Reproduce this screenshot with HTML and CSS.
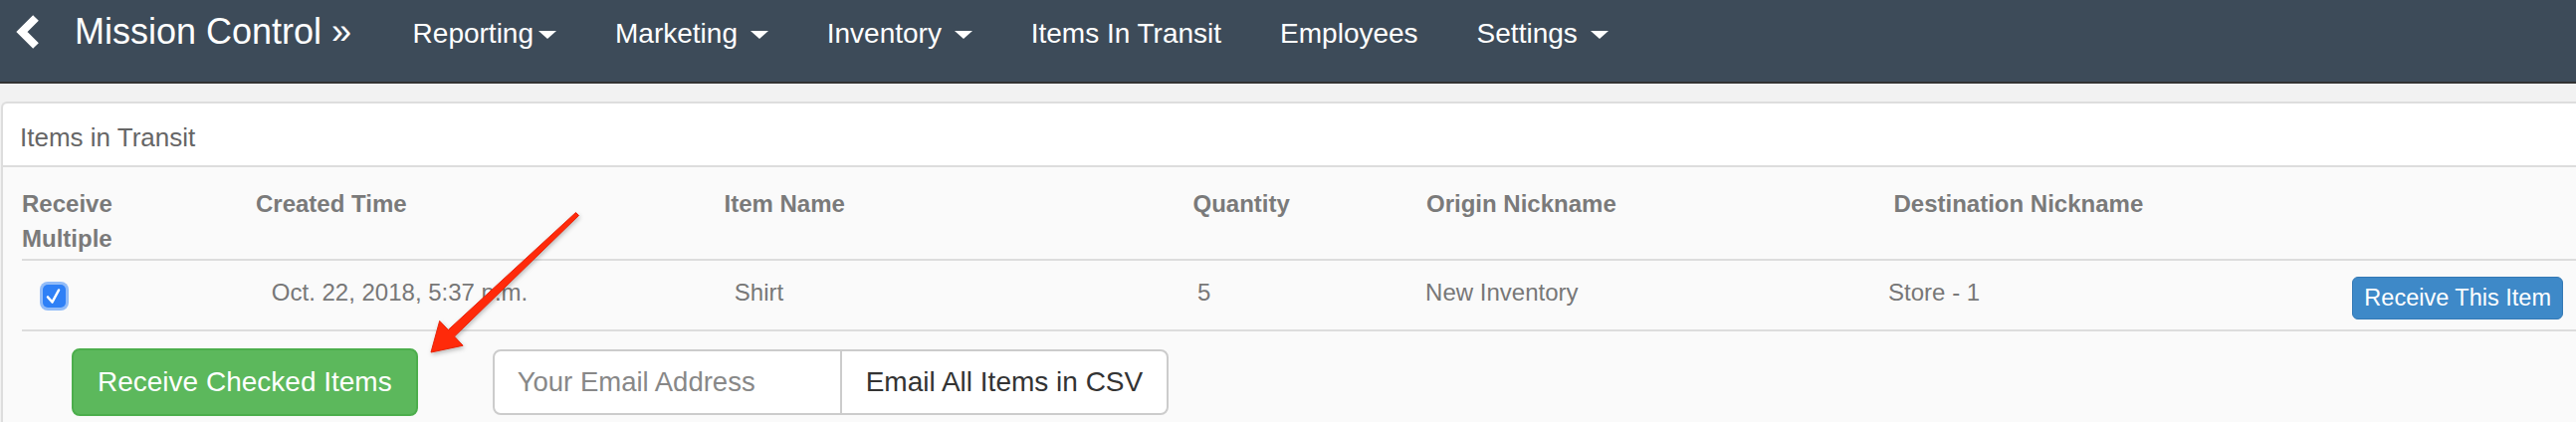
FILE: index.html
```html
<!DOCTYPE html>
<html lang="en">
<head>
    <meta charset="UTF-8">
    <meta name="viewport" content="width=device-width, initial-scale=1.0">
    <title>Items in Transit</title>
    <link rel="stylesheet" href="styles.css">
</head>
<body>

<nav class="navbar">
    <a class="nav-back" href="#">
        <svg width="24" height="34" viewBox="0 0 24 34">
            <polyline points="20,3 6,17 20,31" fill="none" stroke="#fff" stroke-width="8" stroke-linejoin="miter"/>
        </svg>
    </a>
    <a class="brand" href="#">Mission Control &raquo;</a>
    <ul class="nav-links">
        <li><a href="#">Reporting<span class="caret"></span></a></li>
        <li><a href="#">Marketing <span class="caret"></span></a></li>
        <li><a href="#">Inventory <span class="caret"></span></a></li>
        <li><a href="#">Items In Transit</a></li>
        <li><a href="#">Employees</a></li>
        <li><a href="#">Settings <span class="caret"></span></a></li>
    </ul>
</nav>

<div class="page">
    <div class="panel">
        <div class="panel-heading">Items in Transit</div>
        <div class="panel-body">
            <div class="transit-table">
                <div class="t-head">
                    <div class="th-multi">Receive Multiple</div>
                    <div>Created Time</div>
                    <div>Item Name</div>
                    <div>Quantity</div>
                    <div>Origin Nickname</div>
                    <div>Destination Nickname</div>
                </div>
                <div class="t-row">
                    <div class="cell-check"><span class="checkbox checked">
                        <svg width="23" height="23" viewBox="0 0 23 23">
                            <polyline points="5,12.5 9.5,17.5 16,5.5" fill="none" stroke="#fff" stroke-width="2.6" stroke-linecap="round" stroke-linejoin="round"/>
                        </svg>
                    </span></div>
                    <div class="cell">Oct. 22, 2018, 5:37 p.m.</div>
                    <div class="cell">Shirt</div>
                    <div class="cell">5</div>
                    <div class="cell">New Inventory</div>
                    <div class="cell">Store - 1</div>
                    <div class="cell-action"><button class="btn btn-primary">Receive This Item</button></div>
                </div>
            </div>

            <div class="actions">
                <button class="btn btn-success">Receive Checked Items</button>
                <div class="input-group">
                    <input type="email" placeholder="Your Email Address">
                    <button class="btn btn-default">Email All Items in CSV</button>
                </div>
            </div>
        </div>
    </div>
</div>

<!-- annotation drawn over the screenshot -->
<svg class="annotation" width="2588" height="424" viewBox="0 0 2588 424">
    <polygon points="581.5,216.5 456.5,338.1 465.1,347.2 433,354 441.7,322.4 450.3,331.5 578.5,213.5"
             fill="#ff2a0a" stroke="#e82208" stroke-width="1" stroke-linejoin="round"/>
</svg>

</body>
</html>
```

FILE: styles.css
```css
body {
    margin: 0;
    padding: 0;
    background-color: #f2f2f2;
    font-family: "Liberation Sans", Arial, sans-serif;
    color: #777;
    height: 424px;
    overflow: hidden;
    position: relative;
}

a {
    color: inherit;
    text-decoration: none;
}

/* Top navigation */
.navbar {
    display: flex;
    align-items: flex-start;
    height: 82px;
    background-color: #3d4b59;
    border-bottom: 2px solid #333;
    color: #fff;
}

.nav-back {
    display: block;
    margin: 15px 0 0 16px;
    height: 34px;
}

.nav-back svg {
    display: block;
}

.brand {
    margin: 11.5px 32px 0 35px;
    font-size: 36px;
    line-height: 40px;
    white-space: nowrap;
}

.nav-links {
    display: flex;
    list-style: none;
    margin: 0;
    padding: 0;
}

.nav-links a {
    display: block;
    padding: 16.5px 29.5px 0;
    font-size: 28px;
    line-height: 33px;
    white-space: nowrap;
}

.caret {
    display: inline-block;
    width: 0;
    height: 0;
    margin-left: 5px;
    vertical-align: middle;
    border-top: 8px solid #fff;
    border-left: 9px solid transparent;
    border-right: 9px solid transparent;
}

/* Panel */
.page {
    padding: 18px 0 0 1px;
}

.panel {
    border: 2px solid #ddd;
    border-right: none;
    border-bottom: none;
    border-radius: 6px 0 0 0;
    background-color: #fafafa;
    height: 330px;
}

.panel-heading {
    background-color: #fff;
    border-bottom: 2px solid #ddd;
    border-radius: 6px 0 0 0;
    height: 64px;
    box-sizing: border-box;
    padding: 19.5px 0 0 17px;
    font-size: 26px;
    line-height: 29px;
    color: #666;
}

.panel-body {
    padding-left: 19px;
}

/* Table */
.t-head,
.t-row {
    display: grid;
    border-bottom: 2px solid #ddd;
}

.t-head {
    grid-template-columns: 235px 470.5px 471px 234.5px 469.5px 1fr;
    padding: 19px 0 2.5px;
    font-size: 24px;
    font-weight: bold;
    line-height: 35px;
    color: #7a7a7a;
}

.th-multi {
    max-width: 110px;
}

.t-row {
    grid-template-columns: 250.8px 465px 465.3px 229px 465px 1fr auto;
    align-items: center;
    height: 69px;
    padding-right: 13px;
    font-size: 24px;
    line-height: 34px;
    color: #777;
}

.cell {
    padding-bottom: 5px;
}

.cell-check {
    padding: 3px 0 0 20.5px;
}

.cell-action {
    padding-top: 6px;
}

.checkbox {
    display: block;
    width: 23px;
    height: 23px;
    border-radius: 5px;
    background-color: #2f80f6;
    box-shadow: 0 0 0 3px rgba(90, 155, 248, 0.65);
}

.checkbox svg {
    display: block;
}

/* Buttons */
.btn {
    font-family: "Liberation Sans", Arial, sans-serif;
    cursor: pointer;
    white-space: nowrap;
}

.btn-primary {
    font-size: 23.5px;
    line-height: 33px;
    padding: 4px 11px;
    color: #fff;
    background-color: #3e89c8;
    border: 1px solid #3479b5;
    border-radius: 6px;
}

.actions {
    display: flex;
    align-items: flex-start;
    gap: 75px;
    margin: 17px 0 0 50px;
}

.btn-success {
    height: 68px;
    padding: 0 24px;
    font-size: 28px;
    line-height: 64px;
    color: #fff;
    background-color: #5cb85c;
    border: 2px solid #4cae4c;
    border-radius: 8px;
}

.input-group {
    display: flex;
    margin-top: 1px;
    height: 66px;
}

.input-group input {
    width: 350px;
    box-sizing: border-box;
    height: 66px;
    padding: 0 23px;
    font-family: "Liberation Sans", Arial, sans-serif;
    font-size: 27.5px;
    color: #555;
    background-color: #fff;
    border: 2px solid #ccc;
    border-right-width: 1px;
    border-radius: 8px 0 0 8px;
    outline: none;
}

.input-group input::placeholder {
    color: #888;
}

.btn-default {
    height: 66px;
    padding: 0 24px 0 24px;
    font-size: 28px;
    color: #333;
    background-color: #fff;
    border: 2px solid #ccc;
    border-left-width: 1px;
    border-radius: 0 8px 8px 0;
}

/* Red arrow on top of the page */
.annotation {
    position: absolute;
    top: 0;
    left: 0;
    pointer-events: none;
    filter: drop-shadow(1px 2px 2px rgba(0, 0, 0, 0.25));
}
```
